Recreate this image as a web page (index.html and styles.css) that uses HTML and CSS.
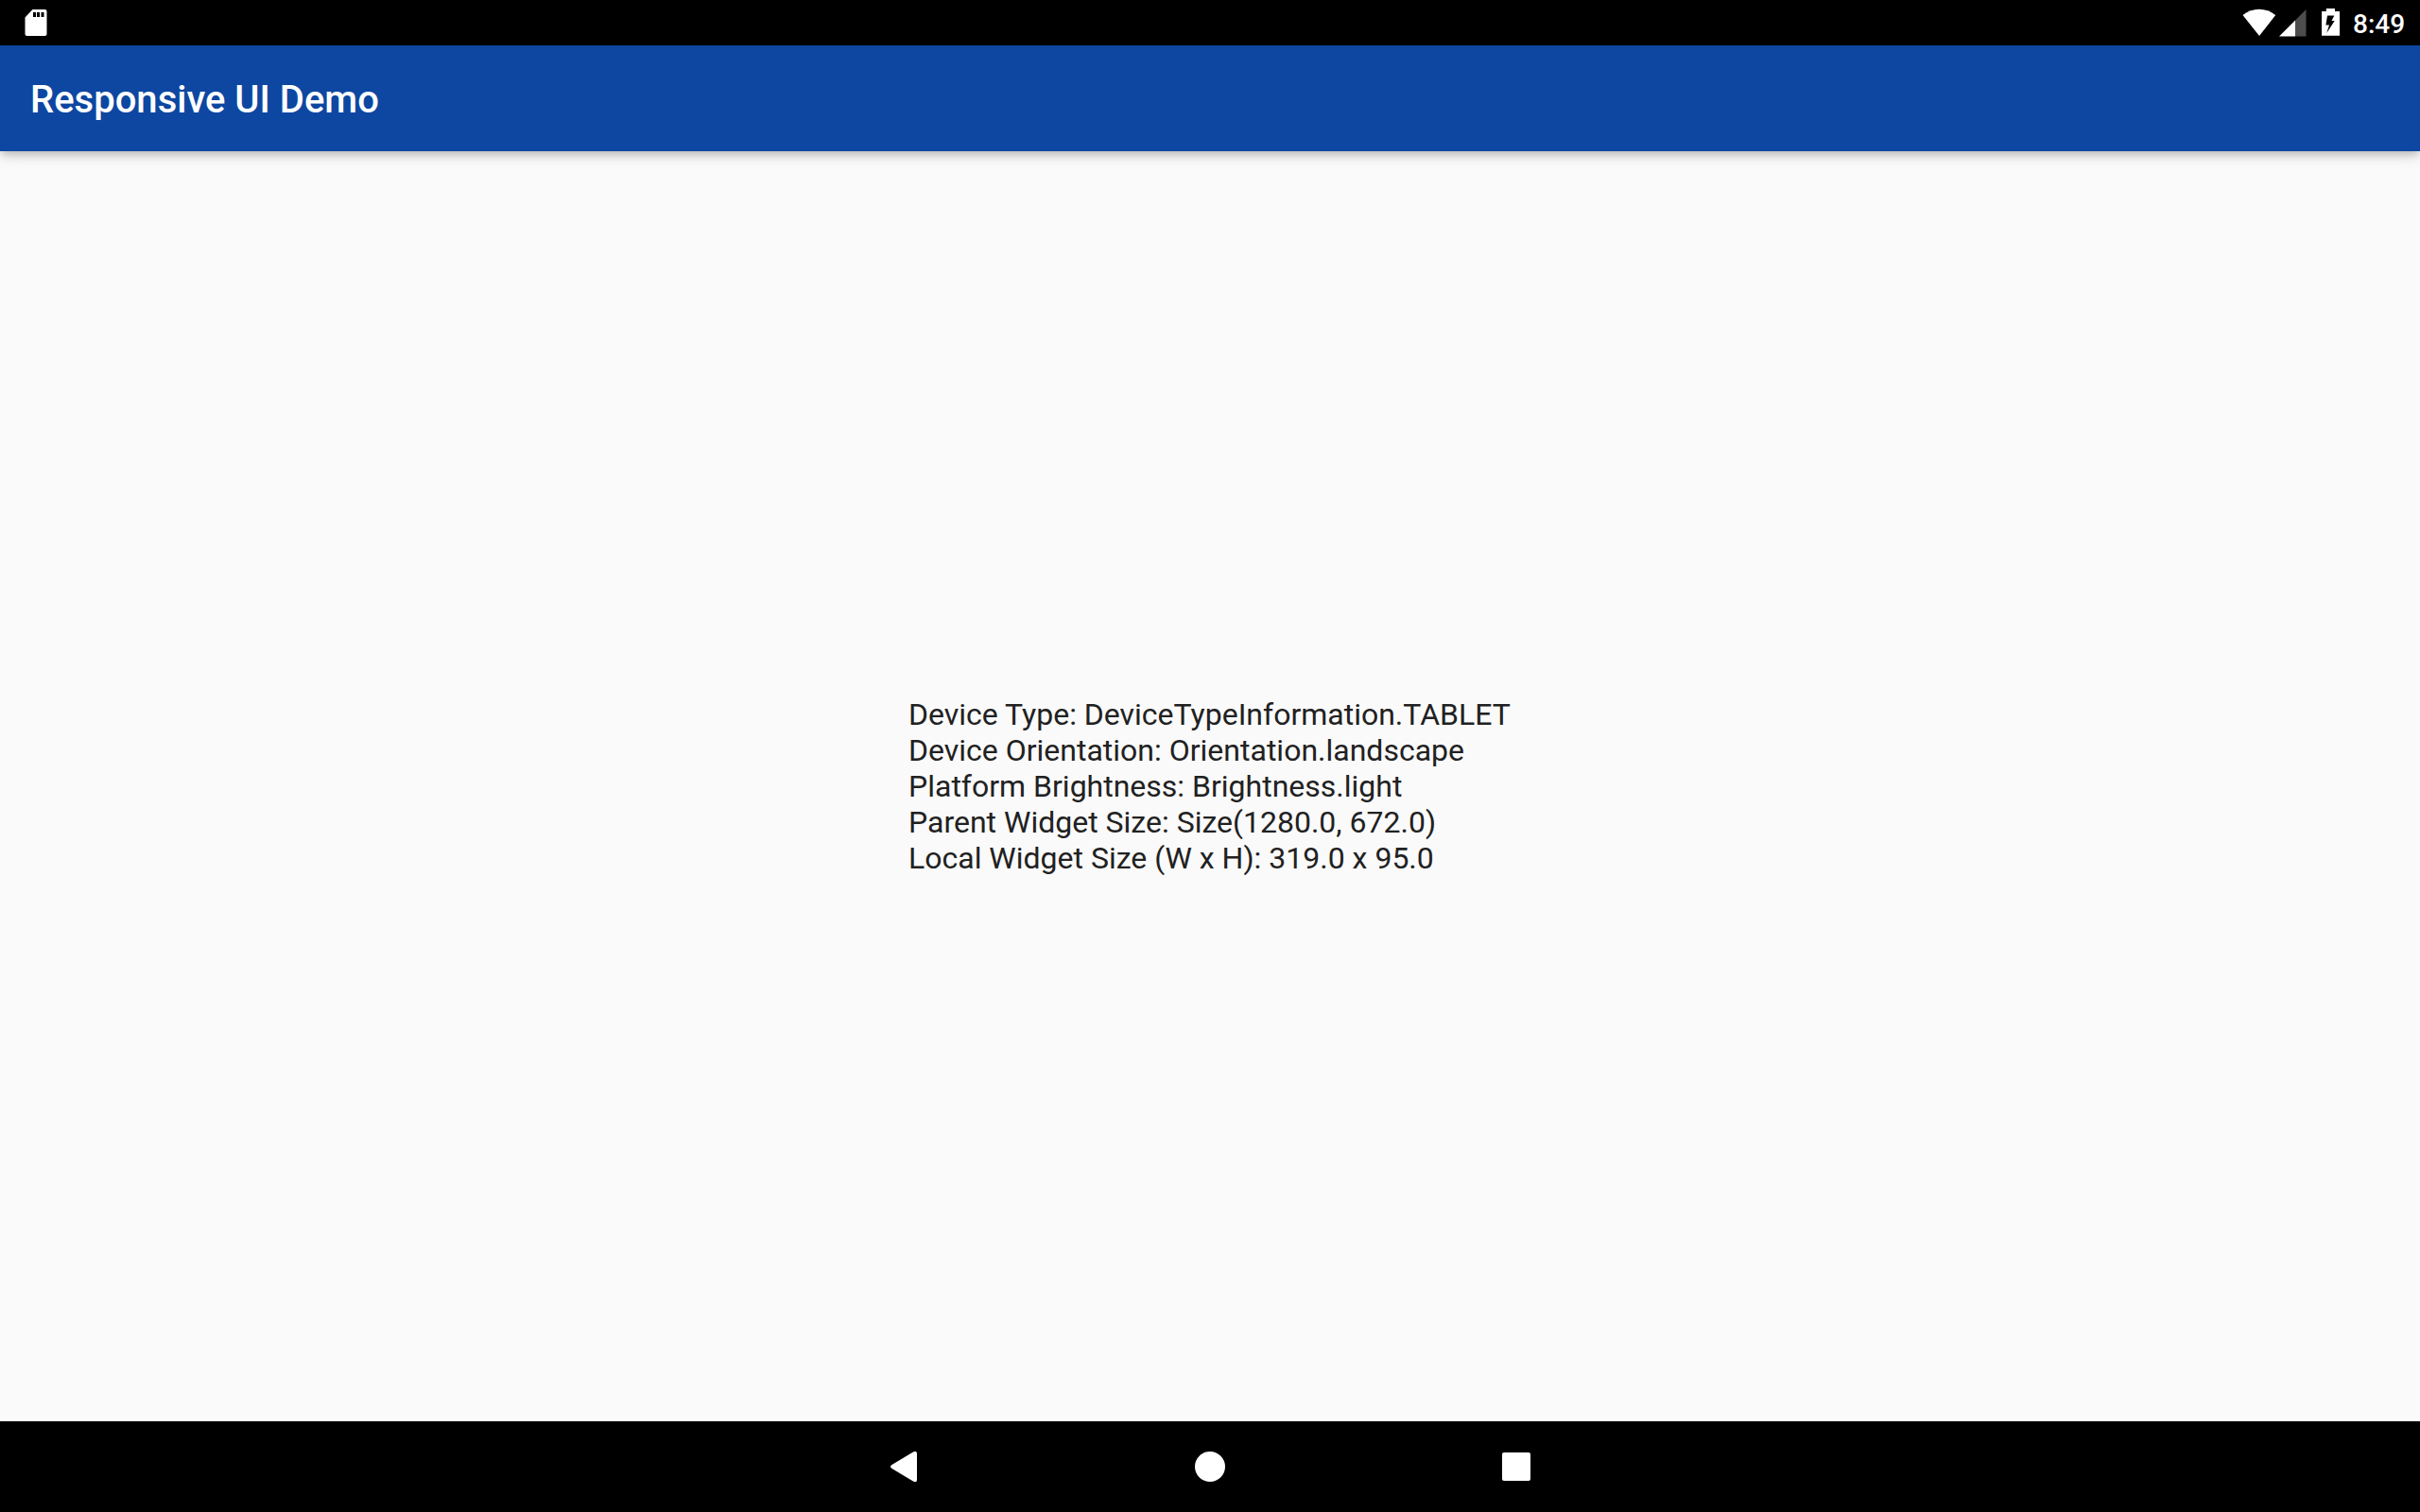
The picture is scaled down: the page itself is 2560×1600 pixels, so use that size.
FILE: index.html
```html
<!DOCTYPE html>
<html lang="en">
<head>
<meta charset="utf-8">
<title>Responsive UI Demo</title>
<link rel="stylesheet" href="styles.css">
</head>
<body>
<div class="status-bar">
  <svg class="icon-sd" width="24" height="28" viewBox="0 0 24 28"><path fill="#fff" fill-rule="evenodd" d="M8.500 0H21.500Q23.500 0 23.500 2V26Q23.500 28 21.500 28H2.500Q.5 28 .5 26V8.500ZM9 3V8H12V3ZM13 3V8H16V3ZM17.500 3V8H20.500V3Z"/></svg>
  <div class="status-right">
    <svg class="icon-wifi" width="36" height="29" viewBox="0 0 36 29"><path fill="#fff" d="M.5 7Q8.500 .8 17.800 .8T35.200 7L18 29Z"/></svg>
    <svg class="icon-signal" width="29" height="29" viewBox="0 0 29 29"><path fill="#4d4d4d" d="M28.500 0V28.500H17V11.500Z"/><path fill="#fff" d="M17 11.500V28.500H0Z"/></svg>
    <svg class="icon-battery" width="20" height="29" viewBox="0 0 20 29"><path fill="#fff" fill-rule="evenodd" d="M4.800 0H14V3H19V28.800H0V3H4.800ZM6 7.500L4.400 17.500H8L5.200 26L13.700 13H10.500L13.300 7.500Z"/></svg>
    <span class="clock">8:49</span>
  </div>
</div>
<header class="app-bar"><h1 class="title">Responsive UI Demo</h1></header>
<main class="content">
  <div class="info">
    <div>Device Type: DeviceTypeInformation.TABLET</div>
    <div>Device Orientation: Orientation.landscape</div>
    <div>Platform Brightness: Brightness.light</div>
    <div>Parent Widget Size: Size(1280.0, 672.0)</div>
    <div>Local Widget Size (W x H): 319.0 x 95.0</div>
  </div>
</main>
<nav class="nav-bar">
  <svg class="icon-back" width="32" height="32" viewBox="0 0 32 32"><path fill="#fff" d="M26 .5Q30 -1.500 30 2.500V29.500Q30 33.500 26 31.500L3.500 18Q.5 16 3.500 14Z"/></svg>
  <svg width="32" height="32" viewBox="0 0 32 32"><circle cx="16" cy="16" r="16" fill="#fff"/></svg>
  <svg width="30" height="30" viewBox="0 0 30 30"><rect width="30" height="30" rx="2" fill="#fff"/></svg>
</nav>
</body>
</html>
```
FILE: styles.css
```css
* { box-sizing: border-box; }
html, body { height: 100%; }
body {
  margin: 0;
  display: flex;
  flex-direction: column;
  background: #fafafa;
  font-family: Roboto, sans-serif;
  overflow: hidden;
}
svg { display: block; flex: none; }
.status-bar {
  height: 48px;
  flex: none;
  display: flex;
  justify-content: space-between;
  align-items: flex-start;
  background: #000;
  padding: 0 16px 0 26px;
}
.icon-sd { margin-top: 10px; }
.status-right { display: flex; align-items: flex-start; }
.icon-wifi { margin-top: 9px; }
.icon-signal { margin: 10px 0 0 3px; }
.icon-battery { margin: 9px 0 0 16px; }
.clock {
  width: 55px;
  margin: 9px 0 0 13px;
  color: #fff;
  font-size: 28px;
  font-weight: 500;
  line-height: 33px;
  white-space: nowrap;
}
.app-bar {
  height: 112px;
  flex: none;
  padding: 34px 32px 0;
  background: #0d47a1;
  box-shadow: 0 4px 8px -2px rgba(0,0,0,.2), 0 8px 10px rgba(0,0,0,.07), 0 2px 20px rgba(0,0,0,.06);
  z-index: 1;
}
.title {
  margin: 0;
  color: #fff;
  font-size: 40px;
  font-weight: 500;
  line-height: 47px;
}
.content {
  flex: 1;
  display: flex;
  align-items: center;
  justify-content: center;
}
.info {
  width: 638px;
  color: #212121;
  font-size: 32px;
  line-height: 38px;
  white-space: nowrap;
}
.nav-bar {
  height: 96px;
  flex: none;
  display: grid;
  grid-template-columns: repeat(3, 324px);
  justify-content: center;
  justify-items: center;
  align-items: center;
  background: #000;
  z-index: 2;
}
```
